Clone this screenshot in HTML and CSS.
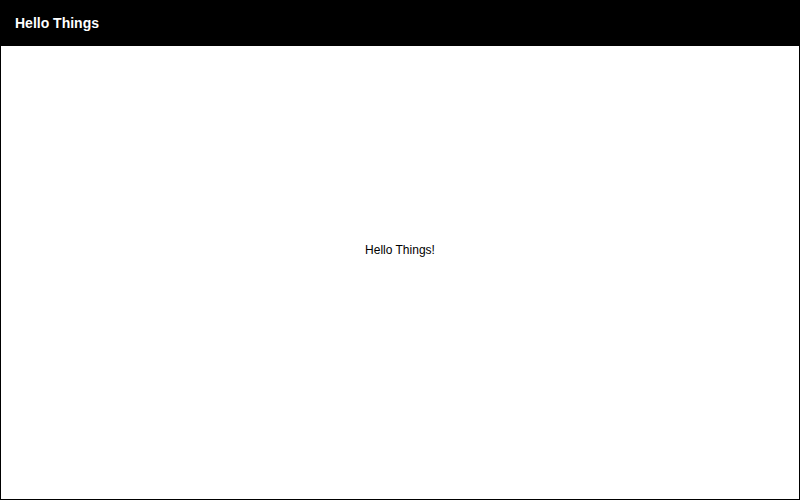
FILE: index.html
```html
<!DOCTYPE html>
<html>
<head>
<meta charset="utf-8">
<link rel="stylesheet" href="styles.css">
</head>
<body>
<div class="app">
  <header class="bar"><span class="title">Hello Things</span></header>
  <main class="content"><p class="msg">Hello Things!</p></main>
</div>
</body>
</html>
```
FILE: styles.css
```css
html, body { margin: 0; padding: 0; }
body { font-family: "Liberation Sans", Arial, sans-serif; background: #fff; }
.app {
  width: 800px; height: 500px; box-sizing: border-box;
  border: 1px solid #000; border-top: none;
  display: flex; flex-direction: column;
}
.bar {
  height: 46px; background: #000; color: #fff;
  display: flex; align-items: center; padding-left: 15px;
  margin: 0 -1px; flex: none;
}
.title { font-size: 14px; font-weight: bold; }
.content {
  flex: 1; display: flex; align-items: center; justify-content: center;
  padding-bottom: 46px;
}
.msg { margin: 0; font-size: 12px; color: #000; }
```
